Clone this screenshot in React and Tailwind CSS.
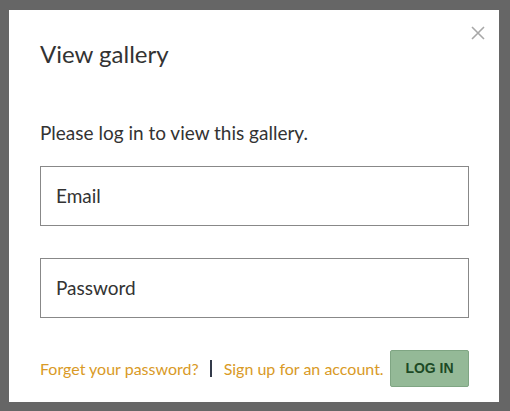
export default function App() {
  return (
    <div className="min-h-[411px] bg-[#666666] pt-[10px] pl-[9px] pr-[11px] pb-[9px] font-['Lato',sans-serif]">
      <div className="relative w-[490px] h-[392px] bg-white pl-[31px] pr-[30px] pt-[29px]">
        {/* close */}
        <button className="absolute right-[14px] top-[16px] text-[#a8a8a8]">
          <svg width="14" height="14" viewBox="0 0 14 14" fill="none" stroke="currentColor" strokeWidth="1.6">
            <path d="M1 1 L13 13 M13 1 L1 13" />
          </svg>
        </button>

        <h2 className="text-[24px] leading-[30px] text-[#333333]">View gallery</h2>

        <p className="mt-[52px] text-[19px] leading-[24px] text-[#333333]">Please log in to view this gallery.</p>

        <div className="mt-[21px] flex flex-col gap-[32px]">
          <div className="h-[60px] border border-[#888888] flex items-center px-[15px] text-[19px] text-[#333333]">Email</div>
          <div className="h-[60px] border border-[#888888] flex items-center px-[15px] text-[19px] text-[#333333]">Password</div>
        </div>

        <div className="mt-[32px] flex items-center">
          <a className="text-[16px] text-[#d99a26]">Forget your password?</a>
          <span className="ml-[11px] mr-[12px] w-[2px] h-[17px] bg-[#333a4a]" />
          <a className="text-[16px] text-[#d99a26]">Sign up for an account.</a>
          <button className="ml-auto w-[79px] h-[37px] rounded-[2px] border border-[#7fa583] bg-[#94b997] text-[#1c4a25] font-['Liberation_Sans',sans-serif] font-bold text-[14px]">
            LOG IN
          </button>
        </div>
      </div>
    </div>
  );
}
